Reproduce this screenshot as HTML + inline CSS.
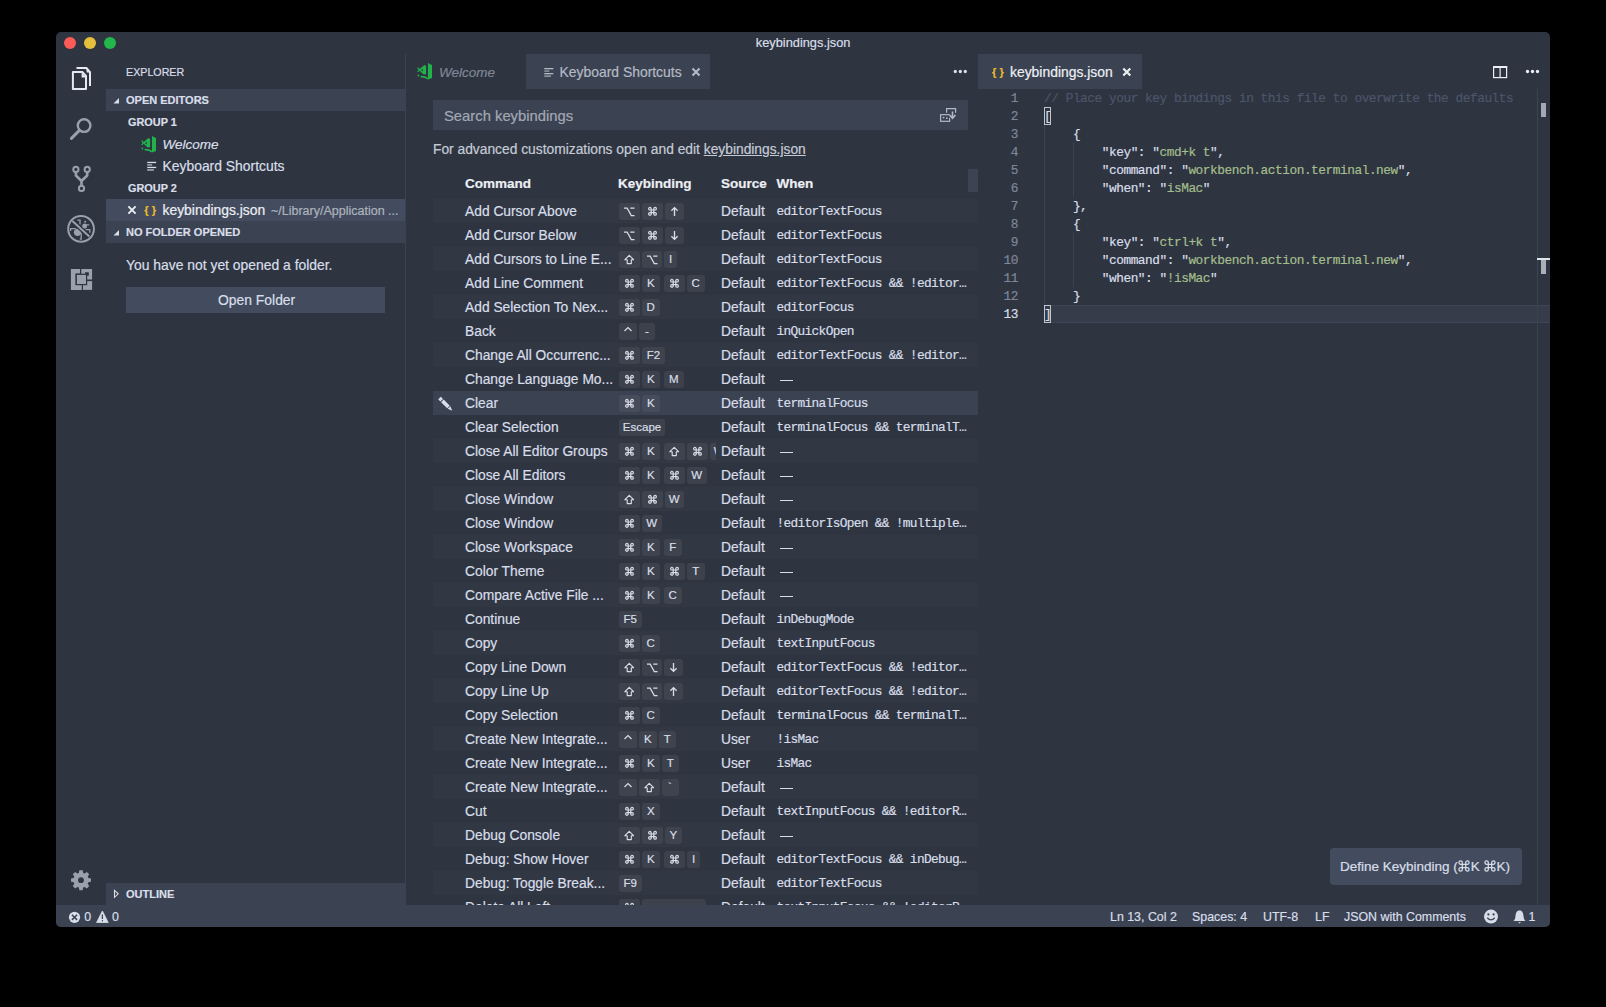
<!DOCTYPE html>
<html><head><meta charset="utf-8"><style>
html,body{margin:0;padding:0;background:#000;width:1606px;height:1007px;overflow:hidden;font-family:'Liberation Sans', sans-serif}
.a{position:absolute}
.t{white-space:pre;-webkit-text-stroke:0.2px currentColor}
.k{position:absolute;height:17px;background:rgba(128,128,128,0.17);border-radius:3px;text-align:center;font-size:11.5px;line-height:17px;color:#d8dee9;-webkit-text-stroke:0.2px currentColor}
.k svg{position:absolute;left:0;top:0}
</style></head><body>
<div class="a" style="left:56px;top:32px;width:1494px;height:895px;background:#2e3440;border-radius:5px"></div>
<div class="a" style="left:64px;top:37px;width:12px;height:12px;background:#fc5b57;border-radius:50%"></div>
<div class="a" style="left:84px;top:37px;width:12px;height:12px;background:#e5bf3c;border-radius:50%"></div>
<div class="a" style="left:104px;top:37px;width:12px;height:12px;background:#23b64b;border-radius:50%"></div>
<div class="a t" style="left:755.8px;top:34.06px;line-height:17px;font-size:12.8px;color:#d8dee9;">keybindings.json</div>
<div class="a" style="left:405px;top:54px;width:1px;height:851px;background:#3b4252;"></div>
<div class="a t" style="left:126px;top:64.89px;line-height:14px;font-size:10.7px;color:#d8dee9;">EXPLORER</div>
<div class="a" style="left:106px;top:89px;width:299px;height:22px;background:#3b4252;"></div>
<div class="a t" style="left:126px;top:93.19px;line-height:14px;font-size:11px;color:#d8dee9;font-weight:700;">OPEN EDITORS</div>
<div class="a t" style="left:128px;top:114.72px;line-height:14px;font-size:10.9px;color:#d8dee9;font-weight:700;">GROUP 1</div>
<div class="a t" style="left:162.5px;top:136.32px;line-height:18px;font-size:13.5px;color:#d8dee9;font-style:italic;">Welcome</div>
<div class="a t" style="left:162.5px;top:157.18px;line-height:18px;font-size:13.9px;color:#d8dee9;">Keyboard Shortcuts</div>
<div class="a t" style="left:128px;top:180.52px;line-height:14px;font-size:10.9px;color:#d8dee9;font-weight:700;">GROUP 2</div>
<div class="a" style="left:106px;top:199px;width:299px;height:22px;background:#434c5e;"></div>
<div class="a t" style="left:144.3px;top:202.79px;line-height:14px;font-size:11px;color:#eabb2a;font-weight:700;letter-spacing:0.1px;">{ }</div>
<div class="a t" style="left:162.5px;top:200.58px;line-height:18px;font-size:13.9px;color:#eceff4;">keybindings.json</div>
<div class="a t" style="left:271px;top:202.87px;line-height:16px;font-size:12.5px;color:#aeb4be;">~/Library/Application ...</div>
<div class="a" style="left:106px;top:221px;width:299px;height:22px;background:#3b4252;"></div>
<div class="a t" style="left:126px;top:225.19px;line-height:14px;font-size:11px;color:#d8dee9;font-weight:700;">NO FOLDER OPENED</div>
<div class="a t" style="left:126px;top:256.18px;line-height:18px;font-size:13.9px;color:#d8dee9;">You have not yet opened a folder.</div>
<div class="a" style="left:126px;top:287px;width:259px;height:26px;background:#434c5e;"></div>
<div class="a t" style="left:218px;top:291.18px;line-height:18px;font-size:13.9px;color:#d8dee9;">Open Folder</div>
<div class="a" style="left:106px;top:883px;width:299px;height:22px;background:#3b4252;"></div>
<div class="a t" style="left:126px;top:887.19px;line-height:14px;font-size:11px;color:#d8dee9;font-weight:700;">OUTLINE</div>
<div class="a" style="left:56px;top:905px;width:1494px;height:22px;background:#3b4252;border-radius:0 0 5px 5px"></div>
<div class="a t" style="left:84.3px;top:909.20px;line-height:16px;font-size:12.4px;color:#d8dee9;">0</div>
<div class="a t" style="left:112px;top:909.20px;line-height:16px;font-size:12.4px;color:#d8dee9;">0</div>
<div class="a t" style="left:1110px;top:909.20px;line-height:16px;font-size:12.4px;color:#d8dee9;">Ln 13, Col 2</div>
<div class="a t" style="left:1192px;top:909.20px;line-height:16px;font-size:12.4px;color:#d8dee9;">Spaces: 4</div>
<div class="a t" style="left:1263px;top:909.20px;line-height:16px;font-size:12.4px;color:#d8dee9;">UTF-8</div>
<div class="a t" style="left:1315px;top:909.20px;line-height:16px;font-size:12.4px;color:#d8dee9;">LF</div>
<div class="a t" style="left:1344px;top:909.20px;line-height:16px;font-size:12.4px;color:#d8dee9;">JSON with Comments</div>
<div class="a t" style="left:1528.5px;top:909.20px;line-height:16px;font-size:12.4px;color:#d8dee9;">1</div>
<div class="a t" style="left:439px;top:63.92px;line-height:18px;font-size:13.5px;color:#7f8796;font-style:italic;">Welcome</div>
<div class="a" style="left:526px;top:54px;width:184px;height:35px;background:#3b4252;"></div>
<div class="a t" style="left:559.6px;top:63.18px;line-height:18px;font-size:13.9px;color:#b4bac4;">Keyboard Shortcuts</div>
<div class="a" style="left:433px;top:100px;width:535px;height:30px;background:#3b4252;"></div>
<div class="a t" style="left:444px;top:107.37px;line-height:19px;font-size:14.8px;color:#a3a9b4;">Search keybindings</div>
<div class="a t" style="left:433px;top:141.22px;line-height:18px;font-size:13.8px;color:#c5cbd6;">For advanced customizations open and edit <u>keybindings.json</u></div>
<div class="a t" style="left:465px;top:175.32px;line-height:18px;font-size:13.5px;color:#eceff4;font-weight:700;">Command</div>
<div class="a t" style="left:618px;top:175.32px;line-height:18px;font-size:13.5px;color:#eceff4;font-weight:700;">Keybinding</div>
<div class="a t" style="left:721px;top:175.32px;line-height:18px;font-size:13.5px;color:#eceff4;font-weight:700;">Source</div>
<div class="a t" style="left:776.5px;top:175.32px;line-height:18px;font-size:13.5px;color:#eceff4;font-weight:700;">When</div>
<div class="a" style="left:0;top:0;width:1606px;height:905px;overflow:hidden">
<div class="a" style="left:433px;top:199px;width:545px;height:24px;background:#313743;"></div>
<div class="a t" style="left:465px;top:203.22px;line-height:18px;font-size:13.8px;color:#d8dee9;">Add Cursor Above</div>
<div class="a" style="left:0;top:0;width:716px;height:905px;overflow:hidden"><div class="k" style="left:619.0px;top:203px;width:20.5px"><svg width="20.5" height="17"><path d="M5,5.2H8.2L12.3,12.6H15.5M11.2,5.2H15.5" fill="none" stroke="#d8dee9" stroke-width="1.2"/></svg></div><div class="k" style="left:641.5px;top:203px;width:21px"><svg width="21" height="17"><g transform="translate(10.5,8.3) scale(0.86) translate(-5,-5)" fill="none" stroke="#d8dee9" stroke-width="1.4"><path d="M3.5,3.5H6.5V6.5H3.5Z"/><path d="M3.5,3.5V2A1.5,1.5 0 1 0 2,3.5H3.5M6.5,3.5V2A1.5,1.5 0 1 1 8,3.5H6.5M3.5,6.5V8A1.5,1.5 0 1 1 2,6.5H3.5M6.5,6.5V8A1.5,1.5 0 1 0 8,6.5H6.5"/></g></svg></div><div class="k" style="left:664.5px;top:203px;width:19px"><svg width="19" height="17"><path d="M9.5,12.9V4.6M6.4,7.7L9.5,4.6L12.6,7.7" fill="none" stroke="#d8dee9" stroke-width="1.35"/></svg></div></div>
<div class="a t" style="left:721px;top:203.22px;line-height:18px;font-size:13.8px;color:#d8dee9;">Default</div>
<div class="a t" style="left:776.5px;top:203.39px;line-height:17px;font-size:12.8px;color:#d8dee9;font-family:'Liberation Mono', monospace;letter-spacing:-0.66px;">editorTextFocus</div>
<div class="a t" style="left:465px;top:227.22px;line-height:18px;font-size:13.8px;color:#d8dee9;">Add Cursor Below</div>
<div class="a" style="left:0;top:0;width:716px;height:905px;overflow:hidden"><div class="k" style="left:619.0px;top:227px;width:20.5px"><svg width="20.5" height="17"><path d="M5,5.2H8.2L12.3,12.6H15.5M11.2,5.2H15.5" fill="none" stroke="#d8dee9" stroke-width="1.2"/></svg></div><div class="k" style="left:641.5px;top:227px;width:21px"><svg width="21" height="17"><g transform="translate(10.5,8.3) scale(0.86) translate(-5,-5)" fill="none" stroke="#d8dee9" stroke-width="1.4"><path d="M3.5,3.5H6.5V6.5H3.5Z"/><path d="M3.5,3.5V2A1.5,1.5 0 1 0 2,3.5H3.5M6.5,3.5V2A1.5,1.5 0 1 1 8,3.5H6.5M3.5,6.5V8A1.5,1.5 0 1 1 2,6.5H3.5M6.5,6.5V8A1.5,1.5 0 1 0 8,6.5H6.5"/></g></svg></div><div class="k" style="left:664.5px;top:227px;width:19px"><svg width="19" height="17"><path d="M9.5,4.1V12.4M6.4,9.3L9.5,12.4L12.6,9.3" fill="none" stroke="#d8dee9" stroke-width="1.35"/></svg></div></div>
<div class="a t" style="left:721px;top:227.22px;line-height:18px;font-size:13.8px;color:#d8dee9;">Default</div>
<div class="a t" style="left:776.5px;top:227.39px;line-height:17px;font-size:12.8px;color:#d8dee9;font-family:'Liberation Mono', monospace;letter-spacing:-0.66px;">editorTextFocus</div>
<div class="a" style="left:433px;top:247px;width:545px;height:24px;background:#313743;"></div>
<div class="a t" style="left:465px;top:251.22px;line-height:18px;font-size:13.8px;color:#d8dee9;">Add Cursors to Line E...</div>
<div class="a" style="left:0;top:0;width:716px;height:905px;overflow:hidden"><div class="k" style="left:619.0px;top:251px;width:20.5px"><svg width="20.5" height="17"><path d="M10.25,4.3L14.6,8.7H12.3V12.6H8.2V8.7H5.9Z" fill="none" stroke="#d8dee9" stroke-width="1.15" stroke-linejoin="round"/></svg></div><div class="k" style="left:641.5px;top:251px;width:20.5px"><svg width="20.5" height="17"><path d="M5,5.2H8.2L12.3,12.6H15.5M11.2,5.2H15.5" fill="none" stroke="#d8dee9" stroke-width="1.2"/></svg></div><div class="k" style="left:664.0px;top:251px;width:13px"><span>I</span></div></div>
<div class="a t" style="left:721px;top:251.22px;line-height:18px;font-size:13.8px;color:#d8dee9;">Default</div>
<div class="a t" style="left:776.5px;top:251.39px;line-height:17px;font-size:12.8px;color:#d8dee9;font-family:'Liberation Mono', monospace;letter-spacing:-0.66px;">editorTextFocus</div>
<div class="a t" style="left:465px;top:275.22px;line-height:18px;font-size:13.8px;color:#d8dee9;">Add Line Comment</div>
<div class="a" style="left:0;top:0;width:716px;height:905px;overflow:hidden"><div class="k" style="left:619.0px;top:275px;width:21px"><svg width="21" height="17"><g transform="translate(10.5,8.3) scale(0.86) translate(-5,-5)" fill="none" stroke="#d8dee9" stroke-width="1.4"><path d="M3.5,3.5H6.5V6.5H3.5Z"/><path d="M3.5,3.5V2A1.5,1.5 0 1 0 2,3.5H3.5M6.5,3.5V2A1.5,1.5 0 1 1 8,3.5H6.5M3.5,6.5V8A1.5,1.5 0 1 1 2,6.5H3.5M6.5,6.5V8A1.5,1.5 0 1 0 8,6.5H6.5"/></g></svg></div><div class="k" style="left:642.0px;top:275px;width:17.5px"><span>K</span></div><div class="k" style="left:664.0px;top:275px;width:21px"><svg width="21" height="17"><g transform="translate(10.5,8.3) scale(0.86) translate(-5,-5)" fill="none" stroke="#d8dee9" stroke-width="1.4"><path d="M3.5,3.5H6.5V6.5H3.5Z"/><path d="M3.5,3.5V2A1.5,1.5 0 1 0 2,3.5H3.5M6.5,3.5V2A1.5,1.5 0 1 1 8,3.5H6.5M3.5,6.5V8A1.5,1.5 0 1 1 2,6.5H3.5M6.5,6.5V8A1.5,1.5 0 1 0 8,6.5H6.5"/></g></svg></div><div class="k" style="left:687.0px;top:275px;width:17.5px"><span>C</span></div></div>
<div class="a t" style="left:721px;top:275.22px;line-height:18px;font-size:13.8px;color:#d8dee9;">Default</div>
<div class="a t" style="left:776.5px;top:275.39px;line-height:17px;font-size:12.8px;color:#d8dee9;font-family:'Liberation Mono', monospace;letter-spacing:-0.66px;">editorTextFocus &amp;&amp; !editor…</div>
<div class="a" style="left:433px;top:295px;width:545px;height:24px;background:#313743;"></div>
<div class="a t" style="left:465px;top:299.22px;line-height:18px;font-size:13.8px;color:#d8dee9;">Add Selection To Nex...</div>
<div class="a" style="left:0;top:0;width:716px;height:905px;overflow:hidden"><div class="k" style="left:619.0px;top:299px;width:21px"><svg width="21" height="17"><g transform="translate(10.5,8.3) scale(0.86) translate(-5,-5)" fill="none" stroke="#d8dee9" stroke-width="1.4"><path d="M3.5,3.5H6.5V6.5H3.5Z"/><path d="M3.5,3.5V2A1.5,1.5 0 1 0 2,3.5H3.5M6.5,3.5V2A1.5,1.5 0 1 1 8,3.5H6.5M3.5,6.5V8A1.5,1.5 0 1 1 2,6.5H3.5M6.5,6.5V8A1.5,1.5 0 1 0 8,6.5H6.5"/></g></svg></div><div class="k" style="left:642.0px;top:299px;width:17.5px"><span>D</span></div></div>
<div class="a t" style="left:721px;top:299.22px;line-height:18px;font-size:13.8px;color:#d8dee9;">Default</div>
<div class="a t" style="left:776.5px;top:299.39px;line-height:17px;font-size:12.8px;color:#d8dee9;font-family:'Liberation Mono', monospace;letter-spacing:-0.66px;">editorFocus</div>
<div class="a t" style="left:465px;top:323.22px;line-height:18px;font-size:13.8px;color:#d8dee9;">Back</div>
<div class="a" style="left:0;top:0;width:716px;height:905px;overflow:hidden"><div class="k" style="left:619.0px;top:323px;width:18px"><svg width="18" height="17"><path d="M5.5,8L9,4.5L12.5,8" fill="none" stroke="#d8dee9" stroke-width="1.2"/></svg></div><div class="k" style="left:639.0px;top:323px;width:16px"><span>-</span></div></div>
<div class="a t" style="left:721px;top:323.22px;line-height:18px;font-size:13.8px;color:#d8dee9;">Default</div>
<div class="a t" style="left:776.5px;top:323.39px;line-height:17px;font-size:12.8px;color:#d8dee9;font-family:'Liberation Mono', monospace;letter-spacing:-0.66px;">inQuickOpen</div>
<div class="a" style="left:433px;top:343px;width:545px;height:24px;background:#313743;"></div>
<div class="a t" style="left:465px;top:347.22px;line-height:18px;font-size:13.8px;color:#d8dee9;">Change All Occurrenc...</div>
<div class="a" style="left:0;top:0;width:716px;height:905px;overflow:hidden"><div class="k" style="left:619.0px;top:347px;width:21px"><svg width="21" height="17"><g transform="translate(10.5,8.3) scale(0.86) translate(-5,-5)" fill="none" stroke="#d8dee9" stroke-width="1.4"><path d="M3.5,3.5H6.5V6.5H3.5Z"/><path d="M3.5,3.5V2A1.5,1.5 0 1 0 2,3.5H3.5M6.5,3.5V2A1.5,1.5 0 1 1 8,3.5H6.5M3.5,6.5V8A1.5,1.5 0 1 1 2,6.5H3.5M6.5,6.5V8A1.5,1.5 0 1 0 8,6.5H6.5"/></g></svg></div><div class="k" style="left:642.0px;top:347px;width:23px"><span>F2</span></div></div>
<div class="a t" style="left:721px;top:347.22px;line-height:18px;font-size:13.8px;color:#d8dee9;">Default</div>
<div class="a t" style="left:776.5px;top:347.39px;line-height:17px;font-size:12.8px;color:#d8dee9;font-family:'Liberation Mono', monospace;letter-spacing:-0.66px;">editorTextFocus &amp;&amp; !editor…</div>
<div class="a t" style="left:465px;top:371.22px;line-height:18px;font-size:13.8px;color:#d8dee9;">Change Language Mo...</div>
<div class="a" style="left:0;top:0;width:716px;height:905px;overflow:hidden"><div class="k" style="left:619.0px;top:371px;width:21px"><svg width="21" height="17"><g transform="translate(10.5,8.3) scale(0.86) translate(-5,-5)" fill="none" stroke="#d8dee9" stroke-width="1.4"><path d="M3.5,3.5H6.5V6.5H3.5Z"/><path d="M3.5,3.5V2A1.5,1.5 0 1 0 2,3.5H3.5M6.5,3.5V2A1.5,1.5 0 1 1 8,3.5H6.5M3.5,6.5V8A1.5,1.5 0 1 1 2,6.5H3.5M6.5,6.5V8A1.5,1.5 0 1 0 8,6.5H6.5"/></g></svg></div><div class="k" style="left:642.0px;top:371px;width:17.5px"><span>K</span></div><div class="k" style="left:664.0px;top:371px;width:19.5px"><span>M</span></div></div>
<div class="a t" style="left:721px;top:371.22px;line-height:18px;font-size:13.8px;color:#d8dee9;">Default</div>
<div class="a" style="left:780px;top:380px;width:13px;height:1.2px;background:#d8dee9;"></div>
<div class="a" style="left:433px;top:391px;width:545px;height:24px;background:#3b4252;"></div>
<div class="a t" style="left:465px;top:395.22px;line-height:18px;font-size:13.8px;color:#d8dee9;">Clear</div>
<div class="a" style="left:0;top:0;width:716px;height:905px;overflow:hidden"><div class="k" style="left:619.0px;top:395px;width:21px"><svg width="21" height="17"><g transform="translate(10.5,8.3) scale(0.86) translate(-5,-5)" fill="none" stroke="#d8dee9" stroke-width="1.4"><path d="M3.5,3.5H6.5V6.5H3.5Z"/><path d="M3.5,3.5V2A1.5,1.5 0 1 0 2,3.5H3.5M6.5,3.5V2A1.5,1.5 0 1 1 8,3.5H6.5M3.5,6.5V8A1.5,1.5 0 1 1 2,6.5H3.5M6.5,6.5V8A1.5,1.5 0 1 0 8,6.5H6.5"/></g></svg></div><div class="k" style="left:642.0px;top:395px;width:17.5px"><span>K</span></div></div>
<div class="a t" style="left:721px;top:395.22px;line-height:18px;font-size:13.8px;color:#d8dee9;">Default</div>
<div class="a t" style="left:776.5px;top:395.39px;line-height:17px;font-size:12.8px;color:#d8dee9;font-family:'Liberation Mono', monospace;letter-spacing:-0.66px;">terminalFocus</div>
<div class="a t" style="left:465px;top:419.22px;line-height:18px;font-size:13.8px;color:#d8dee9;">Clear Selection</div>
<div class="a" style="left:0;top:0;width:716px;height:905px;overflow:hidden"><div class="k" style="left:619.0px;top:419px;width:46px"><span>Escape</span></div></div>
<div class="a t" style="left:721px;top:419.22px;line-height:18px;font-size:13.8px;color:#d8dee9;">Default</div>
<div class="a t" style="left:776.5px;top:419.39px;line-height:17px;font-size:12.8px;color:#d8dee9;font-family:'Liberation Mono', monospace;letter-spacing:-0.66px;">terminalFocus &amp;&amp; terminalT…</div>
<div class="a" style="left:433px;top:439px;width:545px;height:24px;background:#313743;"></div>
<div class="a t" style="left:465px;top:443.22px;line-height:18px;font-size:13.8px;color:#d8dee9;">Close All Editor Groups</div>
<div class="a" style="left:0;top:0;width:716px;height:905px;overflow:hidden"><div class="k" style="left:619.0px;top:443px;width:21px"><svg width="21" height="17"><g transform="translate(10.5,8.3) scale(0.86) translate(-5,-5)" fill="none" stroke="#d8dee9" stroke-width="1.4"><path d="M3.5,3.5H6.5V6.5H3.5Z"/><path d="M3.5,3.5V2A1.5,1.5 0 1 0 2,3.5H3.5M6.5,3.5V2A1.5,1.5 0 1 1 8,3.5H6.5M3.5,6.5V8A1.5,1.5 0 1 1 2,6.5H3.5M6.5,6.5V8A1.5,1.5 0 1 0 8,6.5H6.5"/></g></svg></div><div class="k" style="left:642.0px;top:443px;width:17.5px"><span>K</span></div><div class="k" style="left:664.0px;top:443px;width:20.5px"><svg width="20.5" height="17"><path d="M10.25,4.3L14.6,8.7H12.3V12.6H8.2V8.7H5.9Z" fill="none" stroke="#d8dee9" stroke-width="1.15" stroke-linejoin="round"/></svg></div><div class="k" style="left:686.5px;top:443px;width:21px"><svg width="21" height="17"><g transform="translate(10.5,8.3) scale(0.86) translate(-5,-5)" fill="none" stroke="#d8dee9" stroke-width="1.4"><path d="M3.5,3.5H6.5V6.5H3.5Z"/><path d="M3.5,3.5V2A1.5,1.5 0 1 0 2,3.5H3.5M6.5,3.5V2A1.5,1.5 0 1 1 8,3.5H6.5M3.5,6.5V8A1.5,1.5 0 1 1 2,6.5H3.5M6.5,6.5V8A1.5,1.5 0 1 0 8,6.5H6.5"/></g></svg></div><div class="k" style="left:709.5px;top:443px;width:19.5px"><span>W</span></div></div>
<div class="a t" style="left:721px;top:443.22px;line-height:18px;font-size:13.8px;color:#d8dee9;">Default</div>
<div class="a" style="left:780px;top:452px;width:13px;height:1.2px;background:#d8dee9;"></div>
<div class="a t" style="left:465px;top:467.22px;line-height:18px;font-size:13.8px;color:#d8dee9;">Close All Editors</div>
<div class="a" style="left:0;top:0;width:716px;height:905px;overflow:hidden"><div class="k" style="left:619.0px;top:467px;width:21px"><svg width="21" height="17"><g transform="translate(10.5,8.3) scale(0.86) translate(-5,-5)" fill="none" stroke="#d8dee9" stroke-width="1.4"><path d="M3.5,3.5H6.5V6.5H3.5Z"/><path d="M3.5,3.5V2A1.5,1.5 0 1 0 2,3.5H3.5M6.5,3.5V2A1.5,1.5 0 1 1 8,3.5H6.5M3.5,6.5V8A1.5,1.5 0 1 1 2,6.5H3.5M6.5,6.5V8A1.5,1.5 0 1 0 8,6.5H6.5"/></g></svg></div><div class="k" style="left:642.0px;top:467px;width:17.5px"><span>K</span></div><div class="k" style="left:664.0px;top:467px;width:21px"><svg width="21" height="17"><g transform="translate(10.5,8.3) scale(0.86) translate(-5,-5)" fill="none" stroke="#d8dee9" stroke-width="1.4"><path d="M3.5,3.5H6.5V6.5H3.5Z"/><path d="M3.5,3.5V2A1.5,1.5 0 1 0 2,3.5H3.5M6.5,3.5V2A1.5,1.5 0 1 1 8,3.5H6.5M3.5,6.5V8A1.5,1.5 0 1 1 2,6.5H3.5M6.5,6.5V8A1.5,1.5 0 1 0 8,6.5H6.5"/></g></svg></div><div class="k" style="left:687.0px;top:467px;width:19.5px"><span>W</span></div></div>
<div class="a t" style="left:721px;top:467.22px;line-height:18px;font-size:13.8px;color:#d8dee9;">Default</div>
<div class="a" style="left:780px;top:476px;width:13px;height:1.2px;background:#d8dee9;"></div>
<div class="a" style="left:433px;top:487px;width:545px;height:24px;background:#313743;"></div>
<div class="a t" style="left:465px;top:491.22px;line-height:18px;font-size:13.8px;color:#d8dee9;">Close Window</div>
<div class="a" style="left:0;top:0;width:716px;height:905px;overflow:hidden"><div class="k" style="left:619.0px;top:491px;width:20.5px"><svg width="20.5" height="17"><path d="M10.25,4.3L14.6,8.7H12.3V12.6H8.2V8.7H5.9Z" fill="none" stroke="#d8dee9" stroke-width="1.15" stroke-linejoin="round"/></svg></div><div class="k" style="left:641.5px;top:491px;width:21px"><svg width="21" height="17"><g transform="translate(10.5,8.3) scale(0.86) translate(-5,-5)" fill="none" stroke="#d8dee9" stroke-width="1.4"><path d="M3.5,3.5H6.5V6.5H3.5Z"/><path d="M3.5,3.5V2A1.5,1.5 0 1 0 2,3.5H3.5M6.5,3.5V2A1.5,1.5 0 1 1 8,3.5H6.5M3.5,6.5V8A1.5,1.5 0 1 1 2,6.5H3.5M6.5,6.5V8A1.5,1.5 0 1 0 8,6.5H6.5"/></g></svg></div><div class="k" style="left:664.5px;top:491px;width:19.5px"><span>W</span></div></div>
<div class="a t" style="left:721px;top:491.22px;line-height:18px;font-size:13.8px;color:#d8dee9;">Default</div>
<div class="a" style="left:780px;top:500px;width:13px;height:1.2px;background:#d8dee9;"></div>
<div class="a t" style="left:465px;top:515.22px;line-height:18px;font-size:13.8px;color:#d8dee9;">Close Window</div>
<div class="a" style="left:0;top:0;width:716px;height:905px;overflow:hidden"><div class="k" style="left:619.0px;top:515px;width:21px"><svg width="21" height="17"><g transform="translate(10.5,8.3) scale(0.86) translate(-5,-5)" fill="none" stroke="#d8dee9" stroke-width="1.4"><path d="M3.5,3.5H6.5V6.5H3.5Z"/><path d="M3.5,3.5V2A1.5,1.5 0 1 0 2,3.5H3.5M6.5,3.5V2A1.5,1.5 0 1 1 8,3.5H6.5M3.5,6.5V8A1.5,1.5 0 1 1 2,6.5H3.5M6.5,6.5V8A1.5,1.5 0 1 0 8,6.5H6.5"/></g></svg></div><div class="k" style="left:642.0px;top:515px;width:19.5px"><span>W</span></div></div>
<div class="a t" style="left:721px;top:515.22px;line-height:18px;font-size:13.8px;color:#d8dee9;">Default</div>
<div class="a t" style="left:776.5px;top:515.39px;line-height:17px;font-size:12.8px;color:#d8dee9;font-family:'Liberation Mono', monospace;letter-spacing:-0.66px;">!editorIsOpen &amp;&amp; !multiple…</div>
<div class="a" style="left:433px;top:535px;width:545px;height:24px;background:#313743;"></div>
<div class="a t" style="left:465px;top:539.22px;line-height:18px;font-size:13.8px;color:#d8dee9;">Close Workspace</div>
<div class="a" style="left:0;top:0;width:716px;height:905px;overflow:hidden"><div class="k" style="left:619.0px;top:539px;width:21px"><svg width="21" height="17"><g transform="translate(10.5,8.3) scale(0.86) translate(-5,-5)" fill="none" stroke="#d8dee9" stroke-width="1.4"><path d="M3.5,3.5H6.5V6.5H3.5Z"/><path d="M3.5,3.5V2A1.5,1.5 0 1 0 2,3.5H3.5M6.5,3.5V2A1.5,1.5 0 1 1 8,3.5H6.5M3.5,6.5V8A1.5,1.5 0 1 1 2,6.5H3.5M6.5,6.5V8A1.5,1.5 0 1 0 8,6.5H6.5"/></g></svg></div><div class="k" style="left:642.0px;top:539px;width:17.5px"><span>K</span></div><div class="k" style="left:664.0px;top:539px;width:17.5px"><span>F</span></div></div>
<div class="a t" style="left:721px;top:539.22px;line-height:18px;font-size:13.8px;color:#d8dee9;">Default</div>
<div class="a" style="left:780px;top:548px;width:13px;height:1.2px;background:#d8dee9;"></div>
<div class="a t" style="left:465px;top:563.22px;line-height:18px;font-size:13.8px;color:#d8dee9;">Color Theme</div>
<div class="a" style="left:0;top:0;width:716px;height:905px;overflow:hidden"><div class="k" style="left:619.0px;top:563px;width:21px"><svg width="21" height="17"><g transform="translate(10.5,8.3) scale(0.86) translate(-5,-5)" fill="none" stroke="#d8dee9" stroke-width="1.4"><path d="M3.5,3.5H6.5V6.5H3.5Z"/><path d="M3.5,3.5V2A1.5,1.5 0 1 0 2,3.5H3.5M6.5,3.5V2A1.5,1.5 0 1 1 8,3.5H6.5M3.5,6.5V8A1.5,1.5 0 1 1 2,6.5H3.5M6.5,6.5V8A1.5,1.5 0 1 0 8,6.5H6.5"/></g></svg></div><div class="k" style="left:642.0px;top:563px;width:17.5px"><span>K</span></div><div class="k" style="left:664.0px;top:563px;width:21px"><svg width="21" height="17"><g transform="translate(10.5,8.3) scale(0.86) translate(-5,-5)" fill="none" stroke="#d8dee9" stroke-width="1.4"><path d="M3.5,3.5H6.5V6.5H3.5Z"/><path d="M3.5,3.5V2A1.5,1.5 0 1 0 2,3.5H3.5M6.5,3.5V2A1.5,1.5 0 1 1 8,3.5H6.5M3.5,6.5V8A1.5,1.5 0 1 1 2,6.5H3.5M6.5,6.5V8A1.5,1.5 0 1 0 8,6.5H6.5"/></g></svg></div><div class="k" style="left:687.0px;top:563px;width:17.5px"><span>T</span></div></div>
<div class="a t" style="left:721px;top:563.22px;line-height:18px;font-size:13.8px;color:#d8dee9;">Default</div>
<div class="a" style="left:780px;top:572px;width:13px;height:1.2px;background:#d8dee9;"></div>
<div class="a" style="left:433px;top:583px;width:545px;height:24px;background:#313743;"></div>
<div class="a t" style="left:465px;top:587.22px;line-height:18px;font-size:13.8px;color:#d8dee9;">Compare Active File ...</div>
<div class="a" style="left:0;top:0;width:716px;height:905px;overflow:hidden"><div class="k" style="left:619.0px;top:587px;width:21px"><svg width="21" height="17"><g transform="translate(10.5,8.3) scale(0.86) translate(-5,-5)" fill="none" stroke="#d8dee9" stroke-width="1.4"><path d="M3.5,3.5H6.5V6.5H3.5Z"/><path d="M3.5,3.5V2A1.5,1.5 0 1 0 2,3.5H3.5M6.5,3.5V2A1.5,1.5 0 1 1 8,3.5H6.5M3.5,6.5V8A1.5,1.5 0 1 1 2,6.5H3.5M6.5,6.5V8A1.5,1.5 0 1 0 8,6.5H6.5"/></g></svg></div><div class="k" style="left:642.0px;top:587px;width:17.5px"><span>K</span></div><div class="k" style="left:664.0px;top:587px;width:17.5px"><span>C</span></div></div>
<div class="a t" style="left:721px;top:587.22px;line-height:18px;font-size:13.8px;color:#d8dee9;">Default</div>
<div class="a" style="left:780px;top:596px;width:13px;height:1.2px;background:#d8dee9;"></div>
<div class="a t" style="left:465px;top:611.22px;line-height:18px;font-size:13.8px;color:#d8dee9;">Continue</div>
<div class="a" style="left:0;top:0;width:716px;height:905px;overflow:hidden"><div class="k" style="left:619.0px;top:611px;width:22.5px"><span>F5</span></div></div>
<div class="a t" style="left:721px;top:611.22px;line-height:18px;font-size:13.8px;color:#d8dee9;">Default</div>
<div class="a t" style="left:776.5px;top:611.39px;line-height:17px;font-size:12.8px;color:#d8dee9;font-family:'Liberation Mono', monospace;letter-spacing:-0.66px;">inDebugMode</div>
<div class="a" style="left:433px;top:631px;width:545px;height:24px;background:#313743;"></div>
<div class="a t" style="left:465px;top:635.22px;line-height:18px;font-size:13.8px;color:#d8dee9;">Copy</div>
<div class="a" style="left:0;top:0;width:716px;height:905px;overflow:hidden"><div class="k" style="left:619.0px;top:635px;width:21px"><svg width="21" height="17"><g transform="translate(10.5,8.3) scale(0.86) translate(-5,-5)" fill="none" stroke="#d8dee9" stroke-width="1.4"><path d="M3.5,3.5H6.5V6.5H3.5Z"/><path d="M3.5,3.5V2A1.5,1.5 0 1 0 2,3.5H3.5M6.5,3.5V2A1.5,1.5 0 1 1 8,3.5H6.5M3.5,6.5V8A1.5,1.5 0 1 1 2,6.5H3.5M6.5,6.5V8A1.5,1.5 0 1 0 8,6.5H6.5"/></g></svg></div><div class="k" style="left:642.0px;top:635px;width:17.5px"><span>C</span></div></div>
<div class="a t" style="left:721px;top:635.22px;line-height:18px;font-size:13.8px;color:#d8dee9;">Default</div>
<div class="a t" style="left:776.5px;top:635.39px;line-height:17px;font-size:12.8px;color:#d8dee9;font-family:'Liberation Mono', monospace;letter-spacing:-0.66px;">textInputFocus</div>
<div class="a t" style="left:465px;top:659.22px;line-height:18px;font-size:13.8px;color:#d8dee9;">Copy Line Down</div>
<div class="a" style="left:0;top:0;width:716px;height:905px;overflow:hidden"><div class="k" style="left:619.0px;top:659px;width:20.5px"><svg width="20.5" height="17"><path d="M10.25,4.3L14.6,8.7H12.3V12.6H8.2V8.7H5.9Z" fill="none" stroke="#d8dee9" stroke-width="1.15" stroke-linejoin="round"/></svg></div><div class="k" style="left:641.5px;top:659px;width:20.5px"><svg width="20.5" height="17"><path d="M5,5.2H8.2L12.3,12.6H15.5M11.2,5.2H15.5" fill="none" stroke="#d8dee9" stroke-width="1.2"/></svg></div><div class="k" style="left:664.0px;top:659px;width:19px"><svg width="19" height="17"><path d="M9.5,4.1V12.4M6.4,9.3L9.5,12.4L12.6,9.3" fill="none" stroke="#d8dee9" stroke-width="1.35"/></svg></div></div>
<div class="a t" style="left:721px;top:659.22px;line-height:18px;font-size:13.8px;color:#d8dee9;">Default</div>
<div class="a t" style="left:776.5px;top:659.39px;line-height:17px;font-size:12.8px;color:#d8dee9;font-family:'Liberation Mono', monospace;letter-spacing:-0.66px;">editorTextFocus &amp;&amp; !editor…</div>
<div class="a" style="left:433px;top:679px;width:545px;height:24px;background:#313743;"></div>
<div class="a t" style="left:465px;top:683.22px;line-height:18px;font-size:13.8px;color:#d8dee9;">Copy Line Up</div>
<div class="a" style="left:0;top:0;width:716px;height:905px;overflow:hidden"><div class="k" style="left:619.0px;top:683px;width:20.5px"><svg width="20.5" height="17"><path d="M10.25,4.3L14.6,8.7H12.3V12.6H8.2V8.7H5.9Z" fill="none" stroke="#d8dee9" stroke-width="1.15" stroke-linejoin="round"/></svg></div><div class="k" style="left:641.5px;top:683px;width:20.5px"><svg width="20.5" height="17"><path d="M5,5.2H8.2L12.3,12.6H15.5M11.2,5.2H15.5" fill="none" stroke="#d8dee9" stroke-width="1.2"/></svg></div><div class="k" style="left:664.0px;top:683px;width:19px"><svg width="19" height="17"><path d="M9.5,12.9V4.6M6.4,7.7L9.5,4.6L12.6,7.7" fill="none" stroke="#d8dee9" stroke-width="1.35"/></svg></div></div>
<div class="a t" style="left:721px;top:683.22px;line-height:18px;font-size:13.8px;color:#d8dee9;">Default</div>
<div class="a t" style="left:776.5px;top:683.39px;line-height:17px;font-size:12.8px;color:#d8dee9;font-family:'Liberation Mono', monospace;letter-spacing:-0.66px;">editorTextFocus &amp;&amp; !editor…</div>
<div class="a t" style="left:465px;top:707.22px;line-height:18px;font-size:13.8px;color:#d8dee9;">Copy Selection</div>
<div class="a" style="left:0;top:0;width:716px;height:905px;overflow:hidden"><div class="k" style="left:619.0px;top:707px;width:21px"><svg width="21" height="17"><g transform="translate(10.5,8.3) scale(0.86) translate(-5,-5)" fill="none" stroke="#d8dee9" stroke-width="1.4"><path d="M3.5,3.5H6.5V6.5H3.5Z"/><path d="M3.5,3.5V2A1.5,1.5 0 1 0 2,3.5H3.5M6.5,3.5V2A1.5,1.5 0 1 1 8,3.5H6.5M3.5,6.5V8A1.5,1.5 0 1 1 2,6.5H3.5M6.5,6.5V8A1.5,1.5 0 1 0 8,6.5H6.5"/></g></svg></div><div class="k" style="left:642.0px;top:707px;width:17.5px"><span>C</span></div></div>
<div class="a t" style="left:721px;top:707.22px;line-height:18px;font-size:13.8px;color:#d8dee9;">Default</div>
<div class="a t" style="left:776.5px;top:707.39px;line-height:17px;font-size:12.8px;color:#d8dee9;font-family:'Liberation Mono', monospace;letter-spacing:-0.66px;">terminalFocus &amp;&amp; terminalT…</div>
<div class="a" style="left:433px;top:727px;width:545px;height:24px;background:#313743;"></div>
<div class="a t" style="left:465px;top:731.22px;line-height:18px;font-size:13.8px;color:#d8dee9;">Create New Integrate...</div>
<div class="a" style="left:0;top:0;width:716px;height:905px;overflow:hidden"><div class="k" style="left:619.0px;top:731px;width:18px"><svg width="18" height="17"><path d="M5.5,8L9,4.5L12.5,8" fill="none" stroke="#d8dee9" stroke-width="1.2"/></svg></div><div class="k" style="left:639.0px;top:731px;width:17.5px"><span>K</span></div><div class="k" style="left:658.5px;top:731px;width:17.5px"><span>T</span></div></div>
<div class="a t" style="left:721px;top:731.22px;line-height:18px;font-size:13.8px;color:#d8dee9;">User</div>
<div class="a t" style="left:776.5px;top:731.39px;line-height:17px;font-size:12.8px;color:#d8dee9;font-family:'Liberation Mono', monospace;letter-spacing:-0.66px;">!isMac</div>
<div class="a t" style="left:465px;top:755.22px;line-height:18px;font-size:13.8px;color:#d8dee9;">Create New Integrate...</div>
<div class="a" style="left:0;top:0;width:716px;height:905px;overflow:hidden"><div class="k" style="left:619.0px;top:755px;width:21px"><svg width="21" height="17"><g transform="translate(10.5,8.3) scale(0.86) translate(-5,-5)" fill="none" stroke="#d8dee9" stroke-width="1.4"><path d="M3.5,3.5H6.5V6.5H3.5Z"/><path d="M3.5,3.5V2A1.5,1.5 0 1 0 2,3.5H3.5M6.5,3.5V2A1.5,1.5 0 1 1 8,3.5H6.5M3.5,6.5V8A1.5,1.5 0 1 1 2,6.5H3.5M6.5,6.5V8A1.5,1.5 0 1 0 8,6.5H6.5"/></g></svg></div><div class="k" style="left:642.0px;top:755px;width:17.5px"><span>K</span></div><div class="k" style="left:661.5px;top:755px;width:17.5px"><span>T</span></div></div>
<div class="a t" style="left:721px;top:755.22px;line-height:18px;font-size:13.8px;color:#d8dee9;">User</div>
<div class="a t" style="left:776.5px;top:755.39px;line-height:17px;font-size:12.8px;color:#d8dee9;font-family:'Liberation Mono', monospace;letter-spacing:-0.66px;">isMac</div>
<div class="a" style="left:433px;top:775px;width:545px;height:24px;background:#313743;"></div>
<div class="a t" style="left:465px;top:779.22px;line-height:18px;font-size:13.8px;color:#d8dee9;">Create New Integrate...</div>
<div class="a" style="left:0;top:0;width:716px;height:905px;overflow:hidden"><div class="k" style="left:619.0px;top:779px;width:18px"><svg width="18" height="17"><path d="M5.5,8L9,4.5L12.5,8" fill="none" stroke="#d8dee9" stroke-width="1.2"/></svg></div><div class="k" style="left:639.0px;top:779px;width:20.5px"><svg width="20.5" height="17"><path d="M10.25,4.3L14.6,8.7H12.3V12.6H8.2V8.7H5.9Z" fill="none" stroke="#d8dee9" stroke-width="1.15" stroke-linejoin="round"/></svg></div><div class="k" style="left:661.5px;top:779px;width:17px"><span>`</span></div></div>
<div class="a t" style="left:721px;top:779.22px;line-height:18px;font-size:13.8px;color:#d8dee9;">Default</div>
<div class="a" style="left:780px;top:788px;width:13px;height:1.2px;background:#d8dee9;"></div>
<div class="a t" style="left:465px;top:803.22px;line-height:18px;font-size:13.8px;color:#d8dee9;">Cut</div>
<div class="a" style="left:0;top:0;width:716px;height:905px;overflow:hidden"><div class="k" style="left:619.0px;top:803px;width:21px"><svg width="21" height="17"><g transform="translate(10.5,8.3) scale(0.86) translate(-5,-5)" fill="none" stroke="#d8dee9" stroke-width="1.4"><path d="M3.5,3.5H6.5V6.5H3.5Z"/><path d="M3.5,3.5V2A1.5,1.5 0 1 0 2,3.5H3.5M6.5,3.5V2A1.5,1.5 0 1 1 8,3.5H6.5M3.5,6.5V8A1.5,1.5 0 1 1 2,6.5H3.5M6.5,6.5V8A1.5,1.5 0 1 0 8,6.5H6.5"/></g></svg></div><div class="k" style="left:642.0px;top:803px;width:17.5px"><span>X</span></div></div>
<div class="a t" style="left:721px;top:803.22px;line-height:18px;font-size:13.8px;color:#d8dee9;">Default</div>
<div class="a t" style="left:776.5px;top:803.39px;line-height:17px;font-size:12.8px;color:#d8dee9;font-family:'Liberation Mono', monospace;letter-spacing:-0.66px;">textInputFocus &amp;&amp; !editorR…</div>
<div class="a" style="left:433px;top:823px;width:545px;height:24px;background:#313743;"></div>
<div class="a t" style="left:465px;top:827.22px;line-height:18px;font-size:13.8px;color:#d8dee9;">Debug Console</div>
<div class="a" style="left:0;top:0;width:716px;height:905px;overflow:hidden"><div class="k" style="left:619.0px;top:827px;width:20.5px"><svg width="20.5" height="17"><path d="M10.25,4.3L14.6,8.7H12.3V12.6H8.2V8.7H5.9Z" fill="none" stroke="#d8dee9" stroke-width="1.15" stroke-linejoin="round"/></svg></div><div class="k" style="left:641.5px;top:827px;width:21px"><svg width="21" height="17"><g transform="translate(10.5,8.3) scale(0.86) translate(-5,-5)" fill="none" stroke="#d8dee9" stroke-width="1.4"><path d="M3.5,3.5H6.5V6.5H3.5Z"/><path d="M3.5,3.5V2A1.5,1.5 0 1 0 2,3.5H3.5M6.5,3.5V2A1.5,1.5 0 1 1 8,3.5H6.5M3.5,6.5V8A1.5,1.5 0 1 1 2,6.5H3.5M6.5,6.5V8A1.5,1.5 0 1 0 8,6.5H6.5"/></g></svg></div><div class="k" style="left:664.5px;top:827px;width:17.5px"><span>Y</span></div></div>
<div class="a t" style="left:721px;top:827.22px;line-height:18px;font-size:13.8px;color:#d8dee9;">Default</div>
<div class="a" style="left:780px;top:836px;width:13px;height:1.2px;background:#d8dee9;"></div>
<div class="a t" style="left:465px;top:851.22px;line-height:18px;font-size:13.8px;color:#d8dee9;">Debug: Show Hover</div>
<div class="a" style="left:0;top:0;width:716px;height:905px;overflow:hidden"><div class="k" style="left:619.0px;top:851px;width:21px"><svg width="21" height="17"><g transform="translate(10.5,8.3) scale(0.86) translate(-5,-5)" fill="none" stroke="#d8dee9" stroke-width="1.4"><path d="M3.5,3.5H6.5V6.5H3.5Z"/><path d="M3.5,3.5V2A1.5,1.5 0 1 0 2,3.5H3.5M6.5,3.5V2A1.5,1.5 0 1 1 8,3.5H6.5M3.5,6.5V8A1.5,1.5 0 1 1 2,6.5H3.5M6.5,6.5V8A1.5,1.5 0 1 0 8,6.5H6.5"/></g></svg></div><div class="k" style="left:642.0px;top:851px;width:17.5px"><span>K</span></div><div class="k" style="left:664.0px;top:851px;width:21px"><svg width="21" height="17"><g transform="translate(10.5,8.3) scale(0.86) translate(-5,-5)" fill="none" stroke="#d8dee9" stroke-width="1.4"><path d="M3.5,3.5H6.5V6.5H3.5Z"/><path d="M3.5,3.5V2A1.5,1.5 0 1 0 2,3.5H3.5M6.5,3.5V2A1.5,1.5 0 1 1 8,3.5H6.5M3.5,6.5V8A1.5,1.5 0 1 1 2,6.5H3.5M6.5,6.5V8A1.5,1.5 0 1 0 8,6.5H6.5"/></g></svg></div><div class="k" style="left:687.0px;top:851px;width:13px"><span>I</span></div></div>
<div class="a t" style="left:721px;top:851.22px;line-height:18px;font-size:13.8px;color:#d8dee9;">Default</div>
<div class="a t" style="left:776.5px;top:851.39px;line-height:17px;font-size:12.8px;color:#d8dee9;font-family:'Liberation Mono', monospace;letter-spacing:-0.66px;">editorTextFocus &amp;&amp; inDebug…</div>
<div class="a" style="left:433px;top:871px;width:545px;height:24px;background:#313743;"></div>
<div class="a t" style="left:465px;top:875.22px;line-height:18px;font-size:13.8px;color:#d8dee9;">Debug: Toggle Break...</div>
<div class="a" style="left:0;top:0;width:716px;height:905px;overflow:hidden"><div class="k" style="left:619.0px;top:875px;width:22.5px"><span>F9</span></div></div>
<div class="a t" style="left:721px;top:875.22px;line-height:18px;font-size:13.8px;color:#d8dee9;">Default</div>
<div class="a t" style="left:776.5px;top:875.39px;line-height:17px;font-size:12.8px;color:#d8dee9;font-family:'Liberation Mono', monospace;letter-spacing:-0.66px;">editorTextFocus</div>
<div class="a t" style="left:465px;top:899.22px;line-height:18px;font-size:13.8px;color:#d8dee9;">Delete All Left</div>
<div class="a" style="left:0;top:0;width:716px;height:905px;overflow:hidden"><div class="k" style="left:619.0px;top:899px;width:21px"><svg width="21" height="17"><g transform="translate(10.5,8.3) scale(0.86) translate(-5,-5)" fill="none" stroke="#d8dee9" stroke-width="1.4"><path d="M3.5,3.5H6.5V6.5H3.5Z"/><path d="M3.5,3.5V2A1.5,1.5 0 1 0 2,3.5H3.5M6.5,3.5V2A1.5,1.5 0 1 1 8,3.5H6.5M3.5,6.5V8A1.5,1.5 0 1 1 2,6.5H3.5M6.5,6.5V8A1.5,1.5 0 1 0 8,6.5H6.5"/></g></svg></div><div class="k" style="left:642.0px;top:899px;width:64px"><svg width="64" height="17"></svg></div></div>
<div class="a t" style="left:721px;top:899.22px;line-height:18px;font-size:13.8px;color:#d8dee9;">Default</div>
<div class="a t" style="left:776.5px;top:899.39px;line-height:17px;font-size:12.8px;color:#d8dee9;font-family:'Liberation Mono', monospace;letter-spacing:-0.66px;">textInputFocus &amp;&amp; !editorR…</div>
</div>
<div class="a" style="left:968px;top:169px;width:10px;height:23px;background:#3c4353;"></div>
<div class="a" style="left:978px;top:54px;width:164px;height:35px;background:#3b4252;"></div>
<div class="a t" style="left:992px;top:64.69px;line-height:14px;font-size:11px;color:#eabb2a;font-weight:700;letter-spacing:0.1px;">{ }</div>
<div class="a t" style="left:1010px;top:63.18px;line-height:18px;font-size:13.9px;color:#eceff4;">keybindings.json</div>
<div class="a" style="left:1044px;top:305px;width:506px;height:18px;background:#363c49;box-sizing:border-box;border-top:1px solid #3d4454;border-bottom:1px solid #3d4454"></div>
<div class="a t" style="left:1010.78px;top:89.69px;line-height:17px;font-size:12.8px;color:#7d8797;font-family:'Liberation Mono', monospace;letter-spacing:-0.46px;">1</div>
<div class="a t" style="left:1044px;top:89.69px;line-height:17px;font-size:12.8px;color:#d8dee9;font-family:'Liberation Mono', monospace;letter-spacing:-0.46px;"><span style="color:#4c566a">// Place your key bindings in this file to overwrite the defaults</span></div>
<div class="a t" style="left:1010.78px;top:107.69px;line-height:17px;font-size:12.8px;color:#7d8797;font-family:'Liberation Mono', monospace;letter-spacing:-0.46px;">2</div>
<div class="a t" style="left:1044px;top:107.69px;line-height:17px;font-size:12.8px;color:#d8dee9;font-family:'Liberation Mono', monospace;letter-spacing:-0.46px;">[</div>
<div class="a t" style="left:1010.78px;top:125.69px;line-height:17px;font-size:12.8px;color:#7d8797;font-family:'Liberation Mono', monospace;letter-spacing:-0.46px;">3</div>
<div class="a t" style="left:1044px;top:125.69px;line-height:17px;font-size:12.8px;color:#d8dee9;font-family:'Liberation Mono', monospace;letter-spacing:-0.46px;">    {</div>
<div class="a t" style="left:1010.78px;top:143.69px;line-height:17px;font-size:12.8px;color:#7d8797;font-family:'Liberation Mono', monospace;letter-spacing:-0.46px;">4</div>
<div class="a t" style="left:1044px;top:143.69px;line-height:17px;font-size:12.8px;color:#d8dee9;font-family:'Liberation Mono', monospace;letter-spacing:-0.46px;">        "key": "<span style="color:#a3be8c">cmd+k t</span>",</div>
<div class="a t" style="left:1010.78px;top:161.69px;line-height:17px;font-size:12.8px;color:#7d8797;font-family:'Liberation Mono', monospace;letter-spacing:-0.46px;">5</div>
<div class="a t" style="left:1044px;top:161.69px;line-height:17px;font-size:12.8px;color:#d8dee9;font-family:'Liberation Mono', monospace;letter-spacing:-0.46px;">        "command": "<span style="color:#a3be8c">workbench.action.terminal.new</span>",</div>
<div class="a t" style="left:1010.78px;top:179.69px;line-height:17px;font-size:12.8px;color:#7d8797;font-family:'Liberation Mono', monospace;letter-spacing:-0.46px;">6</div>
<div class="a t" style="left:1044px;top:179.69px;line-height:17px;font-size:12.8px;color:#d8dee9;font-family:'Liberation Mono', monospace;letter-spacing:-0.46px;">        "when": "<span style="color:#a3be8c">isMac</span>"</div>
<div class="a t" style="left:1010.78px;top:197.69px;line-height:17px;font-size:12.8px;color:#7d8797;font-family:'Liberation Mono', monospace;letter-spacing:-0.46px;">7</div>
<div class="a t" style="left:1044px;top:197.69px;line-height:17px;font-size:12.8px;color:#d8dee9;font-family:'Liberation Mono', monospace;letter-spacing:-0.46px;">    },</div>
<div class="a t" style="left:1010.78px;top:215.69px;line-height:17px;font-size:12.8px;color:#7d8797;font-family:'Liberation Mono', monospace;letter-spacing:-0.46px;">8</div>
<div class="a t" style="left:1044px;top:215.69px;line-height:17px;font-size:12.8px;color:#d8dee9;font-family:'Liberation Mono', monospace;letter-spacing:-0.46px;">    {</div>
<div class="a t" style="left:1010.78px;top:233.69px;line-height:17px;font-size:12.8px;color:#7d8797;font-family:'Liberation Mono', monospace;letter-spacing:-0.46px;">9</div>
<div class="a t" style="left:1044px;top:233.69px;line-height:17px;font-size:12.8px;color:#d8dee9;font-family:'Liberation Mono', monospace;letter-spacing:-0.46px;">        "key": "<span style="color:#a3be8c">ctrl+k t</span>",</div>
<div class="a t" style="left:1003.56px;top:251.69px;line-height:17px;font-size:12.8px;color:#7d8797;font-family:'Liberation Mono', monospace;letter-spacing:-0.46px;">10</div>
<div class="a t" style="left:1044px;top:251.69px;line-height:17px;font-size:12.8px;color:#d8dee9;font-family:'Liberation Mono', monospace;letter-spacing:-0.46px;">        "command": "<span style="color:#a3be8c">workbench.action.terminal.new</span>",</div>
<div class="a t" style="left:1003.56px;top:269.69px;line-height:17px;font-size:12.8px;color:#7d8797;font-family:'Liberation Mono', monospace;letter-spacing:-0.46px;">11</div>
<div class="a t" style="left:1044px;top:269.69px;line-height:17px;font-size:12.8px;color:#d8dee9;font-family:'Liberation Mono', monospace;letter-spacing:-0.46px;">        "when": "<span style="color:#a3be8c">!isMac</span>"</div>
<div class="a t" style="left:1003.56px;top:287.69px;line-height:17px;font-size:12.8px;color:#7d8797;font-family:'Liberation Mono', monospace;letter-spacing:-0.46px;">12</div>
<div class="a t" style="left:1044px;top:287.69px;line-height:17px;font-size:12.8px;color:#d8dee9;font-family:'Liberation Mono', monospace;letter-spacing:-0.46px;">    }</div>
<div class="a t" style="left:1003.56px;top:305.69px;line-height:17px;font-size:12.8px;color:#d8dee9;font-family:'Liberation Mono', monospace;letter-spacing:-0.46px;">13</div>
<div class="a t" style="left:1044px;top:305.69px;line-height:17px;font-size:12.8px;color:#d8dee9;font-family:'Liberation Mono', monospace;letter-spacing:-0.46px;">]</div>
<div class="a" style="left:1044px;top:125px;width:1px;height:180px;background:#3b4252;"></div>
<div class="a" style="left:1073px;top:143px;width:1px;height:54px;background:#3b4252;"></div>
<div class="a" style="left:1073px;top:233px;width:1px;height:54px;background:#3b4252;"></div>
<div class="a" style="left:1044px;top:107px;width:7px;height:18px;background:transparent;box-sizing:border-box;border:1px solid #c0c6d0"></div>
<div class="a" style="left:1044px;top:305px;width:7px;height:18px;background:transparent;box-sizing:border-box;border:1px solid #c0c6d0"></div>
<div class="a" style="left:1537px;top:89px;width:1px;height:816px;background:#3b4252;"></div>
<div class="a" style="left:1541px;top:103px;width:5px;height:14px;background:#a3a9b4;"></div>
<div class="a" style="left:1537px;top:258px;width:13px;height:2px;background:#dfe3ea;"></div>
<div class="a" style="left:1541px;top:260px;width:5px;height:14px;background:#a9b0ba;"></div>
<div class="a" style="left:1330px;top:847.5px;width:192px;height:37px;background:#434c5e;border-radius:4px"></div>
<div class="a t" style="left:1340px;top:858.32px;line-height:18px;font-size:13.5px;color:#d8dee9;">Define Keybinding (<svg width="12" height="12" style="vertical-align:-1px;margin:0 0.5px" viewBox="0 0 12 12"><g fill="none" stroke="#d8dee9" stroke-width="1.25"><path d="M4.3,4.3H7.7V7.7H4.3Z M4.3,4.3V2.6A1.7,1.7 0 1 0 2.6,4.3H4.3 M7.7,4.3V2.6A1.7,1.7 0 1 1 9.4,4.3H7.7 M4.3,7.7V9.4A1.7,1.7 0 1 1 2.6,7.7H4.3 M7.7,7.7V9.4A1.7,1.7 0 1 0 9.4,7.7H7.7"/></g></svg>K <svg width="12" height="12" style="vertical-align:-1px;margin:0 0.5px" viewBox="0 0 12 12"><g fill="none" stroke="#d8dee9" stroke-width="1.25"><path d="M4.3,4.3H7.7V7.7H4.3Z M4.3,4.3V2.6A1.7,1.7 0 1 0 2.6,4.3H4.3 M7.7,4.3V2.6A1.7,1.7 0 1 1 9.4,4.3H7.7 M4.3,7.7V9.4A1.7,1.7 0 1 1 2.6,7.7H4.3 M7.7,7.7V9.4A1.7,1.7 0 1 0 9.4,7.7H7.7"/></g></svg>K)</div>
<svg class="a" style="left:0;top:0" width="1606" height="1007" viewBox="0 0 1606 1007">
<g fill="none" stroke="#e5e9f0" stroke-width="2" stroke-linejoin="round"><path d="M72.9,71.9H82.3L86,76V89H72.9Z"/><path d="M76.5,67.9H86.4L90,72.2V86"/></g><path d="M81.6,72.2V77.6H86Z" fill="#e5e9f0"/><path d="M86.2,68.2L89.8,72.4H86.8Z" fill="#e5e9f0"/>
<g fill="none" stroke="#9aa1ad" stroke-linecap="round"><circle cx="84.1" cy="125.6" r="6.3" stroke-width="2.4"/><path d="M79.4,130.4L71.4,138.4" stroke-width="3"/></g>
<g fill="none" stroke="#9aa1ad"><circle cx="75.9" cy="169.4" r="2.6" stroke-width="2"/><circle cx="87.2" cy="169.4" r="2.6" stroke-width="2"/><circle cx="81.5" cy="188.4" r="2.6" stroke-width="2"/><path d="M75.9,172V175.5L81.5,181V185.7M87.2,172V175.5L81.5,181" stroke-width="2.6" stroke-linejoin="round"/></g>
<circle cx="81.06" cy="228.9" r="12.85" fill="none" stroke="#9aa1ad" stroke-width="2"/><g fill="#9aa1ad"><circle cx="77.5" cy="232.3" r="3.6"/><ellipse cx="84.6" cy="226" rx="2.4" ry="2.6"/><circle cx="85.2" cy="221.8" r="1"/></g><g fill="none" stroke="#9aa1ad" stroke-width="1.3"><path d="M70.6,231V228.7H75.8M77.3,220.2H80V224.5M85.6,224.8H89.2M85.6,229.6H89.8V232.8M81.2,233V239.2H79.8"/></g><path d="M72.4,221.1L89.3,236.6" stroke="#2e3440" stroke-width="4.6"/><path d="M72.4,221.1L89.3,236.6" stroke="#9aa1ad" stroke-width="2"/>
<g fill="#9aa1ad" fill-rule="evenodd"><path d="M70.9,268.9H80V273.5H75.5V284.9H81.8V289.9H70.9Z"/><path d="M81.3,268.9H92.1V279.6H81.3Z M85.1,272.3H88.8V275.8H85.1Z"/><path d="M83,281.1H92.1V289.9H83Z"/></g><rect x="75.7" y="273.7" width="11.5" height="11.5" fill="#2e3440"/><rect x="76.9" y="274.9" width="9.1" height="9.1" fill="#9aa1ad"/>
<path fill="#9aa1ad" fill-rule="evenodd" d="M78.84,872.91 L79.33,870.24 L82.67,870.24 L83.16,872.91 L84.63,873.52 L86.87,871.98 L89.22,874.33 L87.68,876.57 L88.29,878.04 L90.96,878.53 L90.96,881.87 L88.29,882.36 L87.68,883.83 L89.22,886.07 L86.87,888.42 L84.63,886.88 L83.16,887.49 L82.67,890.16 L79.33,890.16 L78.84,887.49 L77.37,886.88 L75.13,888.42 L72.78,886.07 L74.32,883.83 L73.71,882.36 L71.04,881.87 L71.04,878.53 L73.71,878.04 L74.32,876.57 L72.78,874.33 L75.13,871.98 L77.37,873.52Z M83.9,880.2 A2.9,2.9 0 1 0 78.1,880.2 A2.9,2.9 0 1 0 83.9,880.2Z"/>
<path d="M113.5,103.5L119,103.5L119,98Z" fill="#d8dee9"/>
<g transform="translate(138,133)"><path d="M14,2.8L15.6,4L18,5V18L14,19.6Z" fill="#22b24c"/><path d="M4.8,9.8L10.4,4.9L12.1,6.1V14.2H9.3Z M8.6,8.6L7,10.2L8.8,11.6Z" fill="#22b24c" fill-rule="evenodd"/><path d="M3.6,7.6L5.6,9.8L3.6,11.9" stroke="#22b24c" stroke-width="1.3" fill="none"/><circle cx="4.4" cy="15.5" r="0.9" fill="#22b24c"/><path d="M6.6,16.5L10.8,17.1L14,18.8" stroke="#22b24c" stroke-width="1.6" fill="none"/></g>
<g fill="#d8dee9"><rect x="147.2" y="161.8" width="9" height="1.3"/><rect x="147.2" y="164.10000000000002" width="5" height="1.6" opacity="0.65"/><rect x="147.2" y="166.8" width="9" height="1.3"/><rect x="147.2" y="169.10000000000002" width="6.7" height="1.7" opacity="0.65"/></g>
<path d="M128.4,206.4L135.6,213.6M135.6,206.4L128.4,213.6" stroke="#eceff4" stroke-width="1.9"/>
<path d="M113.5,235.5L119,235.5L119,230Z" fill="#d8dee9"/>
<path d="M114.5,890.3L118.2,893.8L114.5,897.3Z" fill="none" stroke="#d8dee9" stroke-width="1.1"/>
<circle cx="74.5" cy="917.3" r="5.6" fill="#d8dee9"/><path d="M71.9,914.6999999999999L77.1,919.9M77.1,914.6999999999999L71.9,919.9" stroke="#3b4252" stroke-width="1.5"/>
<path d="M102.4,911L108.2,922.5H96.6Z" fill="#d8dee9" stroke="#d8dee9" stroke-width="0.8" stroke-linejoin="round"/><path d="M102.4,914.5V919" stroke="#3b4252" stroke-width="1.3"/><circle cx="102.4" cy="920.8" r="0.7" fill="#3b4252"/>
<circle cx="1491" cy="916.6" r="7" fill="#d8dee9"/><circle cx="1488.4" cy="914.4" r="1.1" fill="#3b4252"/><circle cx="1493.6" cy="914.4" r="1.1" fill="#3b4252"/><path d="M1487.3,917.8Q1491,922 1494.7,917.8" stroke="#3b4252" stroke-width="1.3" fill="none"/>
<path d="M1519.5,910.5C1516.5,910.5 1515.8,913 1515.5,916C1515.2,919 1514.5,920 1513.5,921H1525.5C1524.5,920 1523.8,919 1523.5,916C1523.2,913 1522.5,910.5 1519.5,910.5Z" fill="#d8dee9"/><path d="M1518,922.2H1521L1519.5,923.6Z" fill="#d8dee9"/>
<g transform="translate(414,60)"><path d="M14,2.8L15.6,4L18,5V18L14,19.6Z" fill="#22b24c"/><path d="M4.8,9.8L10.4,4.9L12.1,6.1V14.2H9.3Z M8.6,8.6L7,10.2L8.8,11.6Z" fill="#22b24c" fill-rule="evenodd"/><path d="M3.6,7.6L5.6,9.8L3.6,11.9" stroke="#22b24c" stroke-width="1.3" fill="none"/><circle cx="4.4" cy="15.5" r="0.9" fill="#22b24c"/><path d="M6.6,16.5L10.8,17.1L14,18.8" stroke="#22b24c" stroke-width="1.6" fill="none"/></g>
<g fill="#b4bac4"><rect x="544.3" y="68" width="9" height="1.3"/><rect x="544.3" y="70.3" width="5" height="1.6" opacity="0.65"/><rect x="544.3" y="73" width="9" height="1.3"/><rect x="544.3" y="75.3" width="6.7" height="1.7" opacity="0.65"/></g>
<path d="M692.5,68.5L699.5,75.5M699.5,68.5L692.5,75.5" stroke="#b4bac4" stroke-width="2.1"/>
<circle cx="955.3" cy="71.5" r="1.65" fill="#d8dee9"/><circle cx="960.3" cy="71.5" r="1.65" fill="#d8dee9"/><circle cx="965.3" cy="71.5" r="1.65" fill="#d8dee9"/>
<g stroke="#b4bac4" fill="none" stroke-width="1.2"><path d="M946.6,112.8V108.6H955.6V112.8"/><rect x="940.6" y="114.7" width="9" height="6.6"/></g><path d="M952.5,111V117.6M949.3,114.9L952.5,118.3L955.7,114.9" stroke="#3b4252" stroke-width="3.6" fill="none"/><path d="M952.5,111.5V117.5M949.5,115L952.5,118.3L955.5,115" stroke="#b4bac4" stroke-width="1.6" fill="none"/><circle cx="943.6" cy="117.6" r="0.9" fill="#b4bac4"/><circle cx="946.8" cy="118.2" r="0.9" fill="#b4bac4"/>
<path d="M440.8,396.7L443,398.9L440.4,401.5L438.2,399.3Z M443.7,399.6L449.8,405.7L447.2,408.3L441.1,402.2Z M450.3,406.2L452.3,410.8L447.7,408.8Z" fill="#d8dee9"/>
<path d="M1123.3,68.5L1130.3,75.5M1130.3,68.5L1123.3,75.5" stroke="#eceff4" stroke-width="2.2"/>
<g fill="none" stroke="#eceff4" stroke-width="1.2"><rect x="1493.6" y="66.6" width="13" height="11"/><path d="M1500.1,67V77.6"/></g><rect x="1493" y="66" width="14.2" height="2" fill="#eceff4"/>
<circle cx="1527.5" cy="71.5" r="1.65" fill="#eceff4"/><circle cx="1532.5" cy="71.5" r="1.65" fill="#eceff4"/><circle cx="1537.5" cy="71.5" r="1.65" fill="#eceff4"/>
</svg>
</body></html>
